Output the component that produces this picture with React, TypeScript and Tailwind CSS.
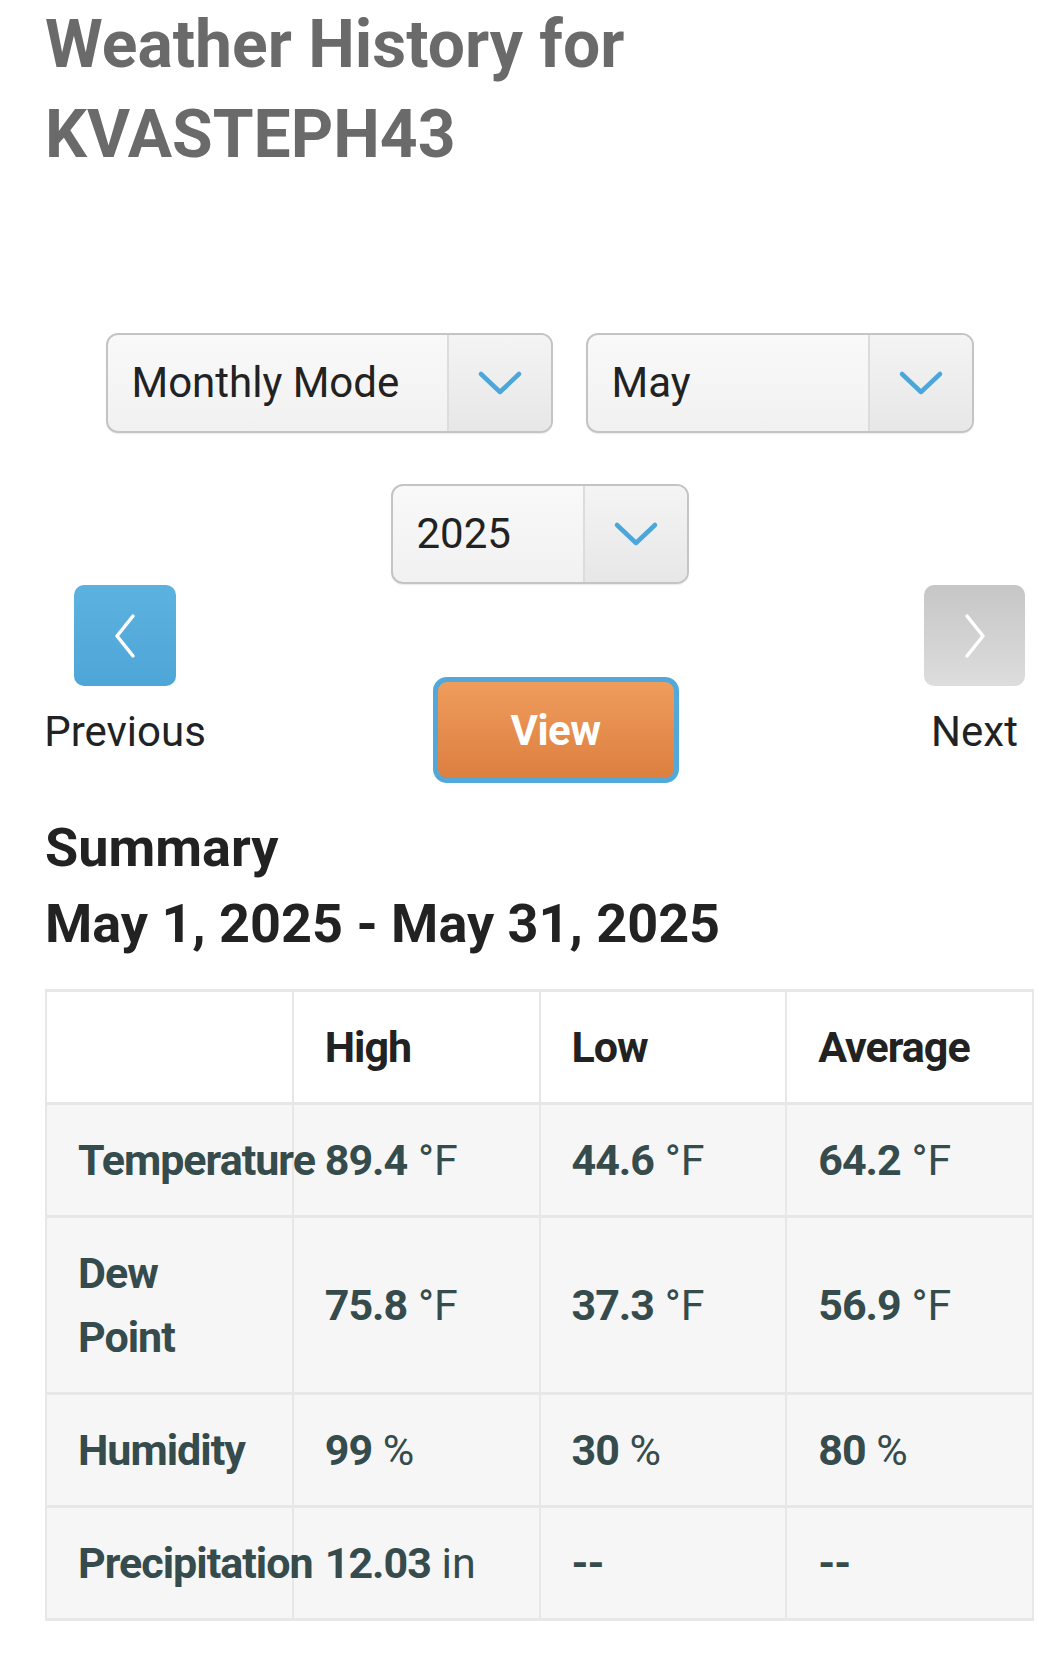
import React from "react";

function Chevron() {
  return (
    <svg width="46" height="26" viewBox="0 0 46 26" fill="none">
      <polyline points="4,4 23,22 42,4" stroke="#4ba7da" strokeWidth="4.5" strokeLinecap="round" strokeLinejoin="round" />
    </svg>
  );
}

function Select({ label, w }: { label: string; w: string }) {
  return (
    <div className={`${w} h-[100px] rounded-[12px] border-2 border-[#c4c4c4] bg-linear-to-b from-[#f9f9f9] to-[#f1f1f1] flex overflow-hidden shadow-[0_1px_1px_rgba(0,0,0,0.08)]`}>
      <div className="flex-1 flex items-center pl-[24px] text-[42px] text-[#222] leading-none">{label}</div>
      <div className="w-[104px] border-l-2 border-[#dcdcdc] bg-linear-to-b from-[#f4f4f4] to-[#e7e7e7] flex items-center justify-center">
        <Chevron />
      </div>
    </div>
  );
}

type Row = { name: string; h: [string, string]; l: [string, string]; a: [string, string] };

const rows: Row[] = [
  { name: "Temperature", h: ["89.4", "°F"], l: ["44.6", "°F"], a: ["64.2", "°F"] },
  { name: "Dew Point", h: ["75.8", "°F"], l: ["37.3", "°F"], a: ["56.9", "°F"] },
  { name: "Humidity", h: ["99", "%"], l: ["30", "%"], a: ["80", "%"] },
  { name: "Precipitation", h: ["12.03", "in"], l: ["--", ""], a: ["--", ""] },
];

function Val({ v }: { v: [string, string] }) {
  return (
    <span className="whitespace-nowrap">
      <span className="font-bold">{v[0]}</span>
      {v[1] ? <span className="font-normal tracking-normal"> {v[1]}</span> : null}
    </span>
  );
}

export default function App() {
  const cell = "border-x-2 border-y-[3px] border-[#e7e7e7] px-[31px] py-[23px] align-middle text-left";
  return (
    <div className="w-[1046px] min-h-[1667px] bg-white font-[Roboto,sans-serif]">
      <div className="pl-[45px] w-[1034px]">
        <h1 className="text-[66px] leading-[90px] font-bold text-[#6a6a6a]">
          Weather History for
          <br />
          KVASTEPH43
        </h1>

        <div className="mt-[153px] flex justify-center gap-[33px]">
          <Select label="Monthly Mode" w="w-[447px]" />
          <Select label="May" w="w-[388px]" />
        </div>
        <div className="mt-[51px] flex justify-center">
          <Select label="2025" w="w-[298px]" />
        </div>

        <div className="mt-[1px] flex items-start pr-[9px]">
          <div className="w-[160px] flex flex-col items-center">
            <div className="w-[102px] h-[101px] rounded-[10px] bg-linear-to-b from-[#5cb2df] to-[#4ea6d8] flex items-center justify-center">
              <svg width="26" height="46" viewBox="0 0 26 46" fill="none">
                <polyline points="21,3 5,23 21,43" stroke="white" strokeWidth="3.5" strokeLinecap="round" strokeLinejoin="round" />
              </svg>
            </div>
            <div className="mt-[22px] text-[42px] leading-[48px] text-[#222]">Previous</div>
          </div>
          <div className="flex-1 flex justify-center pt-[92px] pr-[18px]">
            <div className="w-[246px] h-[106px] rounded-[14px] border-[5px] border-[#52a9d9] bg-linear-to-b from-[#ef9c5d] to-[#dc7f3f] flex items-center justify-center text-white font-bold text-[42px] tracking-[-0.5px]">
              View
            </div>
          </div>
          <div className="w-[101px] flex flex-col items-center">
            <div className="w-[101px] h-[101px] rounded-[10px] bg-linear-to-b from-[#c6c6c6] to-[#dddddd] flex items-center justify-center">
              <svg width="26" height="46" viewBox="0 0 26 46" fill="none">
                <polyline points="5,3 21,23 5,43" stroke="white" strokeWidth="3.5" strokeLinecap="round" strokeLinejoin="round" />
              </svg>
            </div>
            <div className="mt-[22px] text-[42px] leading-[48px] text-[#222]">Next</div>
          </div>
        </div>

        <div className="mt-[27px] text-[54px] leading-[76px] font-bold text-[#222]">
          <div>Summary</div>
          <div>May 1, 2025 - May 31, 2025</div>
        </div>

        <table className="mt-[27px] w-[989px] table-fixed border-collapse text-[43px] leading-[64px] tracking-[-1px]">
          <thead>
            <tr className="bg-white text-[#222]">
              <th className={cell}></th>
              <th className={cell + " font-bold"}>High</th>
              <th className={cell + " font-bold"}>Low</th>
              <th className={cell + " font-bold"}>Average</th>
            </tr>
          </thead>
          <tbody>
            {rows.map((r) => (
              <tr key={r.name} className="bg-[#f6f6f6] text-[#354b4c]">
                <td className={cell + " font-bold" + (r.name === "Dew Point" ? "" : " whitespace-nowrap")}>{r.name}</td>
                <td className={cell}><Val v={r.h} /></td>
                <td className={cell}><Val v={r.l} /></td>
                <td className={cell}><Val v={r.a} /></td>
              </tr>
            ))}
          </tbody>
        </table>
      </div>
    </div>
  );
}
